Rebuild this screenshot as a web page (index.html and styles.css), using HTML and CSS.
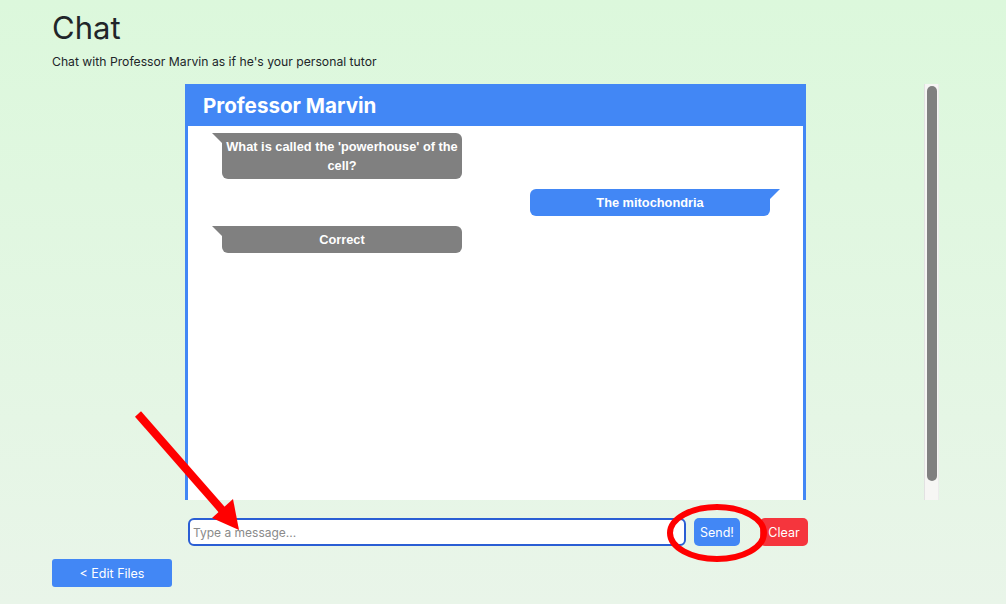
FILE: index.html
```html
<!DOCTYPE html>
<html>
<head>
<meta charset="utf-8">
<link rel="stylesheet" href="styles.css">
</head>
<body>
<div class="page">
  <h1 class="title">Chat</h1>
  <p class="subtitle">Chat with Professor Marvin as if he's your personal tutor</p>
  <div class="chat-row">
    <div class="chat-box">
      <div class="chat-header">Professor Marvin</div>
      <div class="chat-body">
        <div class="bubble bot">What is called the 'powerhouse' of the cell?</div>
        <div class="bubble user">The mitochondria</div>
        <div class="bubble bot">Correct</div>
      </div>
    </div>
    <div class="scrollbar"><div class="thumb"></div></div>
  </div>
  <div class="input-row">
    <input class="msg-input" type="text" placeholder="Type a message...">
    <button class="btn send">Send!</button>
    <button class="btn clear">Clear</button>
  </div>
  <button class="btn edit">&lt; Edit Files</button>
</div>
<svg class="annotations" width="1006" height="604" viewBox="0 0 1006 604">
  <line x1="138" y1="414" x2="222" y2="510" stroke="#ff0000" stroke-width="8"/>
  <polygon points="239,530 212,518 233,499" fill="#ff0000"/>
  <ellipse cx="717" cy="533" rx="47" ry="26" fill="none" stroke="#ff0000" stroke-width="6"/>
</svg>
</body>
</html>
```
FILE: styles.css
```css
html, body {
  margin: 0;
  padding: 0;
}
body {
  width: 1006px;
  height: 604px;
  overflow: hidden;
  position: relative;
  background: linear-gradient(180deg, #dcf8dc 0%, #e9f5e9 100%);
  font-family: Inter, "Noto Sans", sans-serif;
  color: #212529;
}
.page {
  padding: 0 0 0 52px;
}
.title {
  margin: 0;
  padding-top: 9px;
  font-size: 31px;
  line-height: 38px;
  font-weight: 400;
}
.subtitle {
  margin: 6px 0 0;
  font-size: 12.2px;
  line-height: 17px;
}
.chat-row {
  display: flex;
  width: 887px;
  height: 416px;
  margin-top: 14px;
}
.chat-box {
  margin-left: 133px;
  width: 621px;
  height: 416px;
  box-sizing: border-box;
  border: 3px solid #4287f5;
  border-bottom: 0;
  background: #fff;
  display: flex;
  flex-direction: column;
}
.chat-header {
  background: #4287f5;
  color: #fff;
  height: 39px;
  line-height: 37px;
  padding-left: 15px;
  font-size: 20.6px;
  font-weight: 700;
}
.chat-body {
  flex: 1;
  padding: 7px 33px 0 34px;
  display: flex;
  flex-direction: column;
  gap: 10px;
}
.bubble {
  position: relative;
  width: 240px;
  box-sizing: border-box;
  padding: 4px 3px;
  line-height: 19px;
  font-family: "Liberation Sans", Arial, sans-serif;
  font-weight: 700;
  font-size: 12.8px;
  color: #fff;
  text-align: center;
}
.bubble.bot {
  background: #808080;
  border-radius: 0 6px 6px 6px;
  align-self: flex-start;
}
.bubble.bot::before {
  content: "";
  position: absolute;
  left: -10px;
  top: 0;
  border-top: 10px solid #808080;
  border-left: 10px solid transparent;
}
.bubble.user {
  background: #4287f5;
  border-radius: 6px 0 6px 6px;
  align-self: flex-end;
}
.bubble.user::after {
  content: "";
  position: absolute;
  right: -10px;
  top: 0;
  border-top: 10px solid #4287f5;
  border-right: 10px solid transparent;
}
.scrollbar {
  margin-left: auto;
  width: 15px;
  height: 416px;
  box-sizing: border-box;
  background: #f6f6f4;
  border-left: 1px solid #e2e2e2;
  border-right: 1px solid #ececec;
  padding: 2px 1px 0 2px;
}
.thumb {
  height: 395px;
  background: #808080;
  border-radius: 6px;
}
.input-row {
  display: flex;
  align-items: center;
  margin: 18px 0 0 136px;
}
.msg-input {
  width: 498px;
  height: 28px;
  box-sizing: border-box;
  border: 2px solid #2a5ed4;
  border-radius: 6px;
  padding: 0 3px;
  font-family: Inter, "Noto Sans", sans-serif;
  font-size: 12px;
  background: #fff;
  outline: none;
}
.msg-input::placeholder {
  color: #8a8a8a;
}
.btn {
  border: 0;
  color: #fff;
  font-family: Inter, "Noto Sans", sans-serif;
  font-size: 12.5px;
  height: 28px;
  padding: 0;
  border-radius: 5px;
}
.send {
  margin-left: 8px;
  width: 46px;
  background: #4287f5;
}
.clear {
  margin-left: 20px;
  width: 48px;
  background: #f5353d;
}
.edit {
  display: block;
  margin-top: 13px;
  width: 120px;
  background: #4287f5;
  border-radius: 3px;
}
.annotations {
  position: absolute;
  left: 0;
  top: 0;
  pointer-events: none;
}
```
